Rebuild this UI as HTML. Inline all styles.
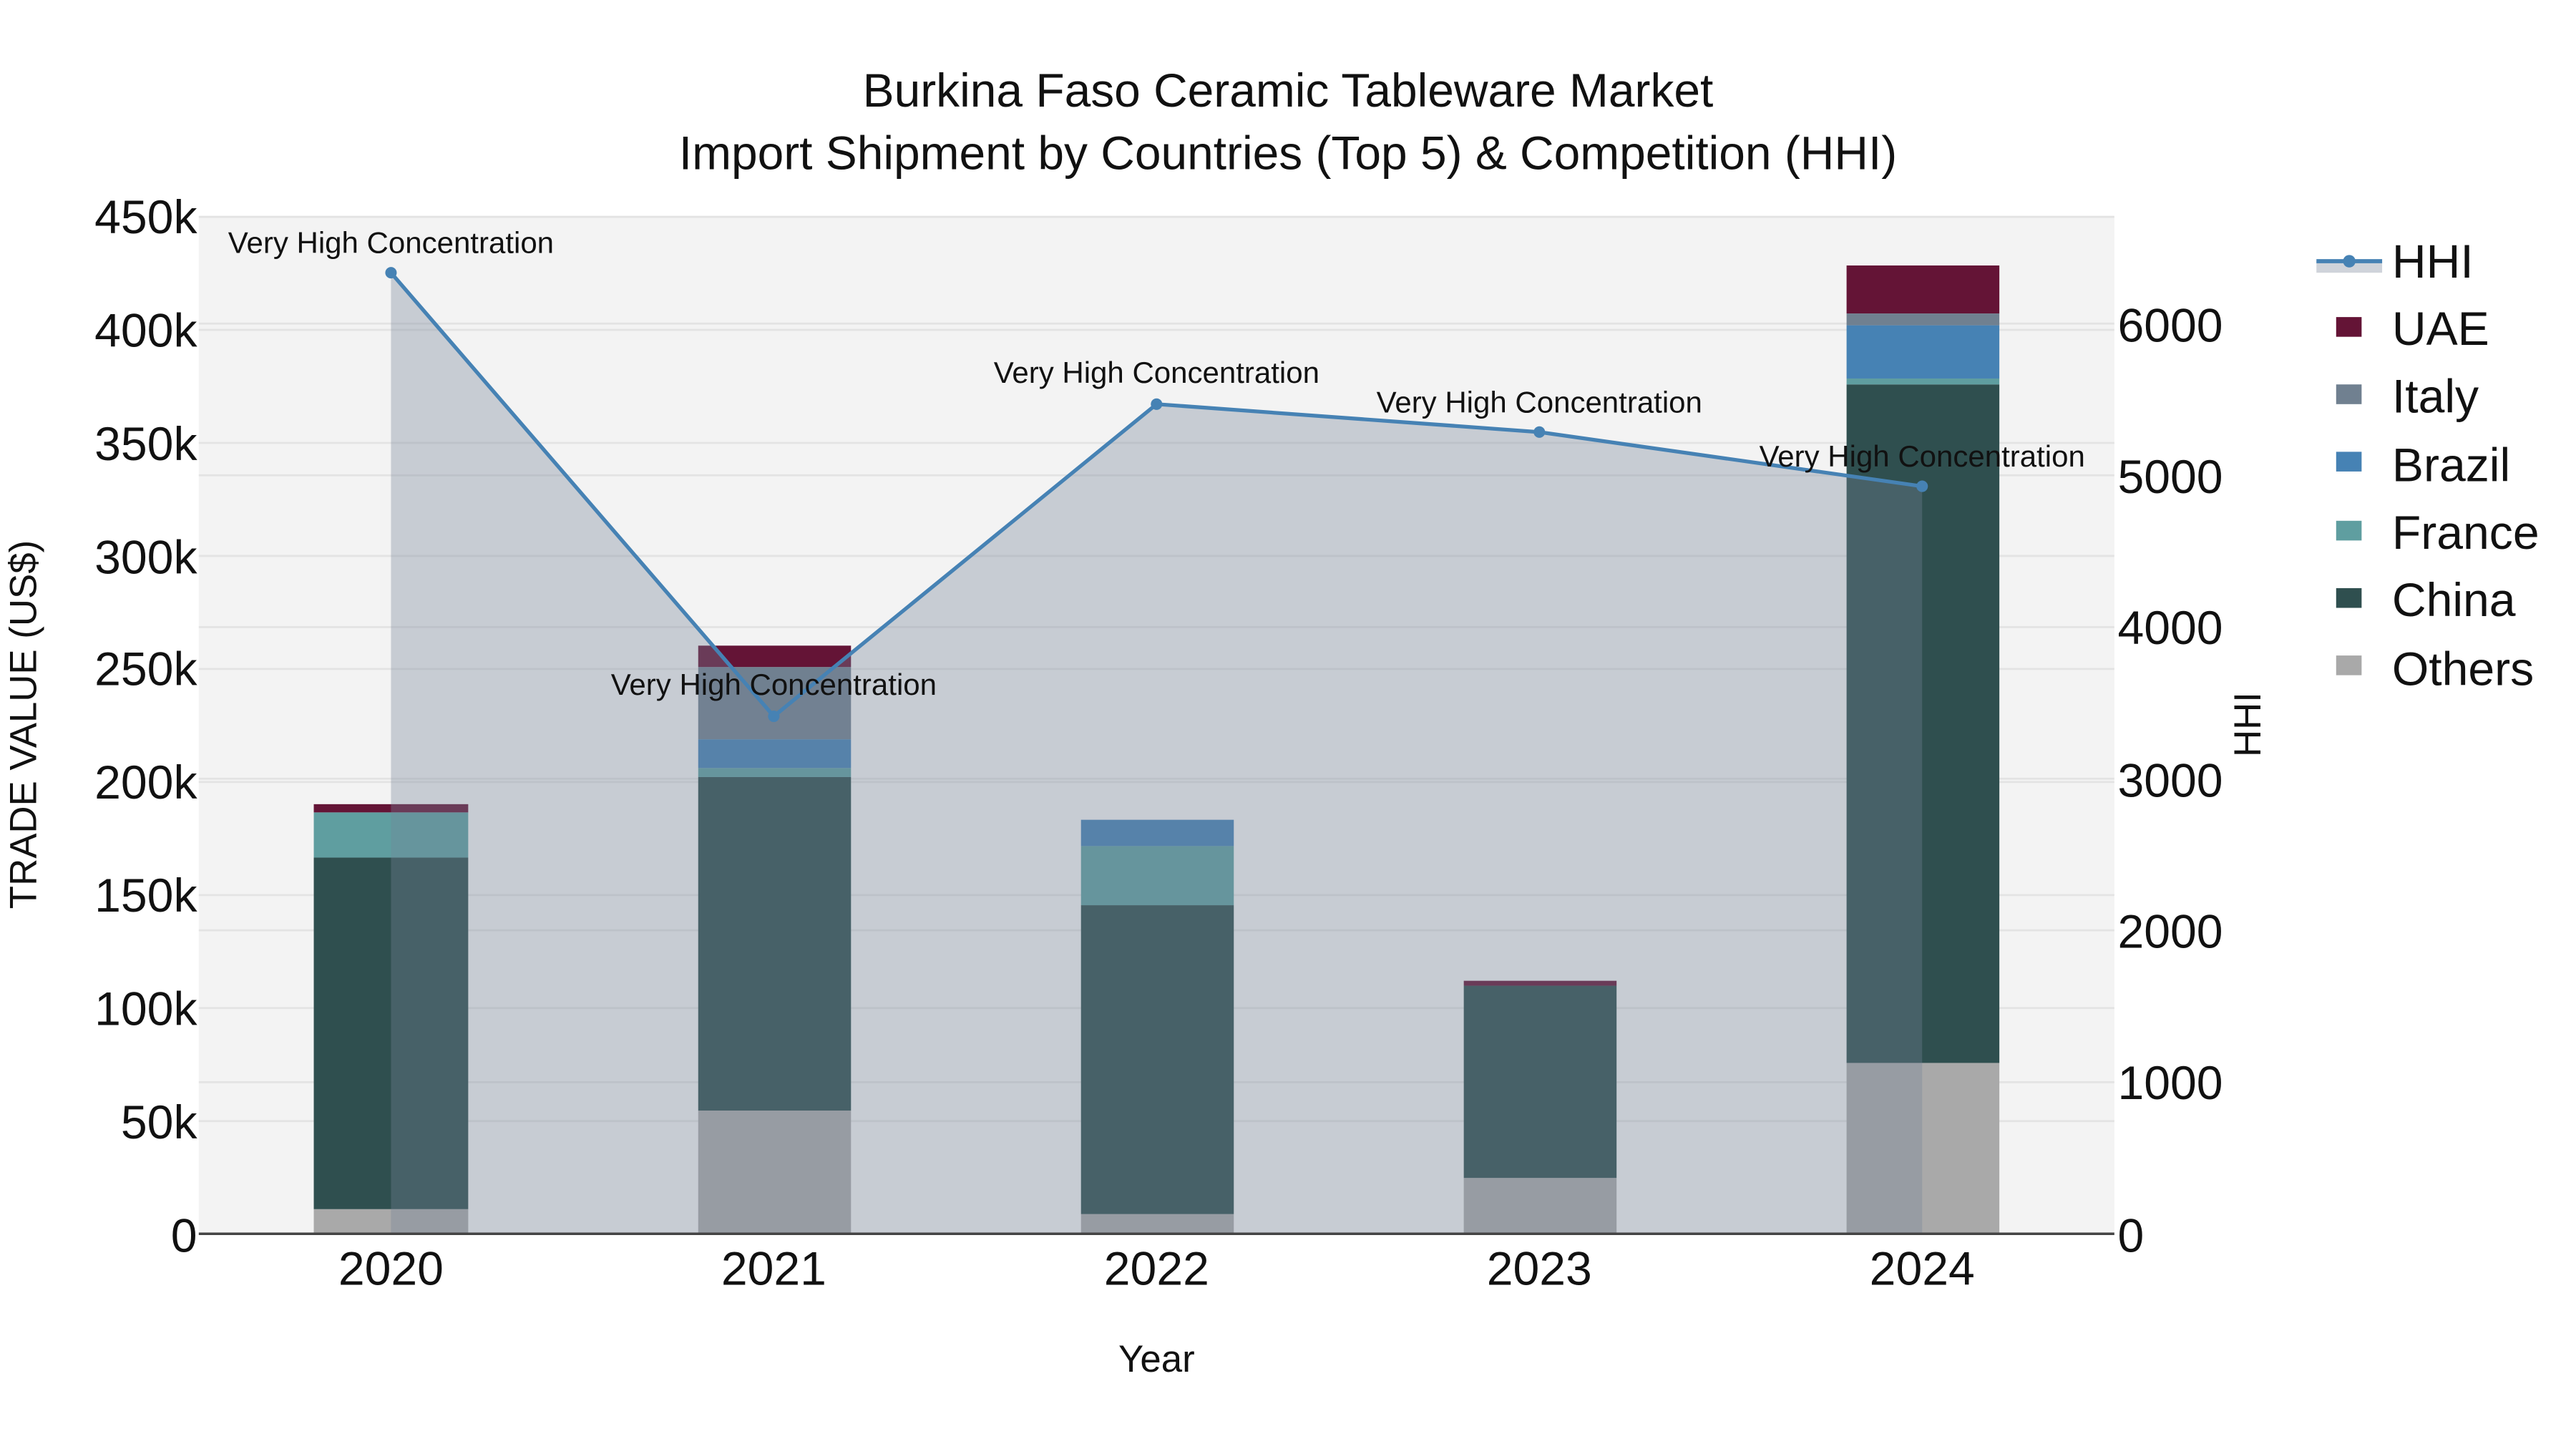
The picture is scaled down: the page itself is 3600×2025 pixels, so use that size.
<!DOCTYPE html>
<html><head><meta charset="utf-8"><style>
html,body{margin:0;padding:0;background:#fff;}
svg{display:block;}
text{font-family:"Liberation Sans",Arial,sans-serif;fill:#111;}
</style></head><body>
<svg width="3600" height="2025" viewBox="0 0 1568 882" xmlns="http://www.w3.org/2000/svg">
<rect x="0" y="0" width="1568" height="882" fill="#fff"/>
<rect x="121" y="131.5" width="1166" height="619.5" fill="#f3f3f3"/>
<g stroke="#e3e3e3" stroke-width="1.2">
<line x1="121" x2="1287" y1="132" y2="132"/>
<line x1="121" x2="1287" y1="200.8" y2="200.8"/>
<line x1="121" x2="1287" y1="269.6" y2="269.6"/>
<line x1="121" x2="1287" y1="338.4" y2="338.4"/>
<line x1="121" x2="1287" y1="407.2" y2="407.2"/>
<line x1="121" x2="1287" y1="476" y2="476"/>
<line x1="121" x2="1287" y1="544.8" y2="544.8"/>
<line x1="121" x2="1287" y1="613.6" y2="613.6"/>
<line x1="121" x2="1287" y1="682.4" y2="682.4"/>
<line x1="121" x2="1287" y1="197" y2="197"/>
<line x1="121" x2="1287" y1="289.3" y2="289.3"/>
<line x1="121" x2="1287" y1="381.7" y2="381.7"/>
<line x1="121" x2="1287" y1="474" y2="474"/>
<line x1="121" x2="1287" y1="566.3" y2="566.3"/>
<line x1="121" x2="1287" y1="658.7" y2="658.7"/>
</g>
<g>
<rect x="191" y="736" width="94" height="15" fill="#a9a9a9"/>
<rect x="191" y="522" width="94" height="214" fill="#2f4f4f"/>
<rect x="191" y="494.5" width="94" height="27.5" fill="#5f9ea0"/>
<rect x="191" y="489.5" width="94" height="5" fill="#641436"/>
<rect x="425" y="676" width="93" height="75" fill="#a9a9a9"/>
<rect x="425" y="473" width="93" height="203" fill="#2f4f4f"/>
<rect x="425" y="467.5" width="93" height="5.5" fill="#5f9ea0"/>
<rect x="425" y="450" width="93" height="17.5" fill="#4682b4"/>
<rect x="425" y="406" width="93" height="44" fill="#708090"/>
<rect x="425" y="393" width="93" height="13" fill="#641436"/>
<rect x="658" y="739" width="93" height="12" fill="#a9a9a9"/>
<rect x="658" y="551" width="93" height="188" fill="#2f4f4f"/>
<rect x="658" y="515" width="93" height="36" fill="#5f9ea0"/>
<rect x="658" y="499" width="93" height="16" fill="#4682b4"/>
<rect x="891" y="717" width="93" height="34" fill="#a9a9a9"/>
<rect x="891" y="600" width="93" height="117" fill="#2f4f4f"/>
<rect x="891" y="597" width="93" height="3" fill="#641436"/>
<rect x="1124" y="647" width="93" height="104" fill="#a9a9a9"/>
<rect x="1124" y="234" width="93" height="413" fill="#2f4f4f"/>
<rect x="1124" y="230.4" width="93" height="3.6" fill="#5f9ea0"/>
<rect x="1124" y="198" width="93" height="32.4" fill="#4682b4"/>
<rect x="1124" y="190.8" width="93" height="7.2" fill="#708090"/>
<rect x="1124" y="161.6" width="93" height="29.2" fill="#641436"/>
</g>
<path d="M238,166 L471,436 L704,246 L937,263 L1170,296 L1170,751 L238,751 Z" fill="rgb(118,132,153)" fill-opacity="0.35"/>
<polyline points="238,166 471,436 704,246 937,263 1170,296" fill="none" stroke="#4682b4" stroke-width="2.3"/>
<g fill="#4682b4">
<circle cx="238" cy="166" r="3.5"/><circle cx="471" cy="436" r="3.5"/><circle cx="704" cy="246" r="3.5"/><circle cx="937" cy="263" r="3.5"/><circle cx="1170" cy="296" r="3.5"/>
</g>
<line x1="121" x2="1287" y1="751" y2="751" stroke="#444" stroke-width="1.5"/>
<g font-size="18.3" text-anchor="middle">
<text x="238" y="154">Very High Concentration</text>
<text x="471" y="423">Very High Concentration</text>
<text x="704" y="233">Very High Concentration</text>
<text x="937" y="251">Very High Concentration</text>
<text x="1170" y="284">Very High Concentration</text>
</g>
<g font-size="28.7" text-anchor="middle">
<text x="784" y="65">Burkina Faso Ceramic Tableware Market</text>
<text x="784" y="103">Import Shipment by Countries (Top 5) &amp; Competition (HHI)</text>
</g>
<g font-size="28.8" text-anchor="end">
<text x="120" y="142">450k</text>
<text x="120" y="211">400k</text>
<text x="120" y="280">350k</text>
<text x="120" y="349">300k</text>
<text x="120" y="417">250k</text>
<text x="120" y="486">200k</text>
<text x="120" y="555">150k</text>
<text x="120" y="624">100k</text>
<text x="120" y="693">50k</text>
<text x="120" y="762">0</text>
</g>
<g font-size="28.8" text-anchor="start">
<text x="1289" y="208">6000</text>
<text x="1289" y="300">5000</text>
<text x="1289" y="392">4000</text>
<text x="1289" y="485">3000</text>
<text x="1289" y="577">2000</text>
<text x="1289" y="669">1000</text>
<text x="1289" y="762">0</text>
</g>
<g font-size="28.8" text-anchor="middle">
<text x="238" y="782">2020</text>
<text x="471" y="782">2021</text>
<text x="704" y="782">2022</text>
<text x="937" y="782">2023</text>
<text x="1170" y="782">2024</text>
</g>
<text x="704" y="835" font-size="23" text-anchor="middle">Year</text>
<text transform="translate(22,441) rotate(-90)" font-size="23" text-anchor="middle">TRADE VALUE (US$)</text>
<text transform="translate(1376,441) rotate(-90)" font-size="23" text-anchor="middle">HHI</text>
<rect x="1410" y="159" width="40" height="7" fill="#cfd3da"/>
<line x1="1410" x2="1450" y1="159" y2="159" stroke="#4682b4" stroke-width="2.5"/>
<circle cx="1430" cy="159" r="3.8" fill="#4682b4"/>
<g font-size="28.8">
<text x="1456" y="169">HHI</text>
<text x="1456" y="210">UAE</text>
<text x="1456" y="251">Italy</text>
<text x="1456" y="293">Brazil</text>
<text x="1456" y="334">France</text>
<text x="1456" y="375">China</text>
<text x="1456" y="417">Others</text>
</g>
<rect x="1422" y="193" width="15.5" height="12" fill="#641436"/>
<rect x="1422" y="234" width="15.5" height="12" fill="#708090"/>
<rect x="1422" y="275" width="15.5" height="12" fill="#4682b4"/>
<rect x="1422" y="317" width="15.5" height="12" fill="#5f9ea0"/>
<rect x="1422" y="358" width="15.5" height="12" fill="#2f4f4f"/>
<rect x="1422" y="399" width="15.5" height="12" fill="#a9a9a9"/>
</svg>
</body></html>
